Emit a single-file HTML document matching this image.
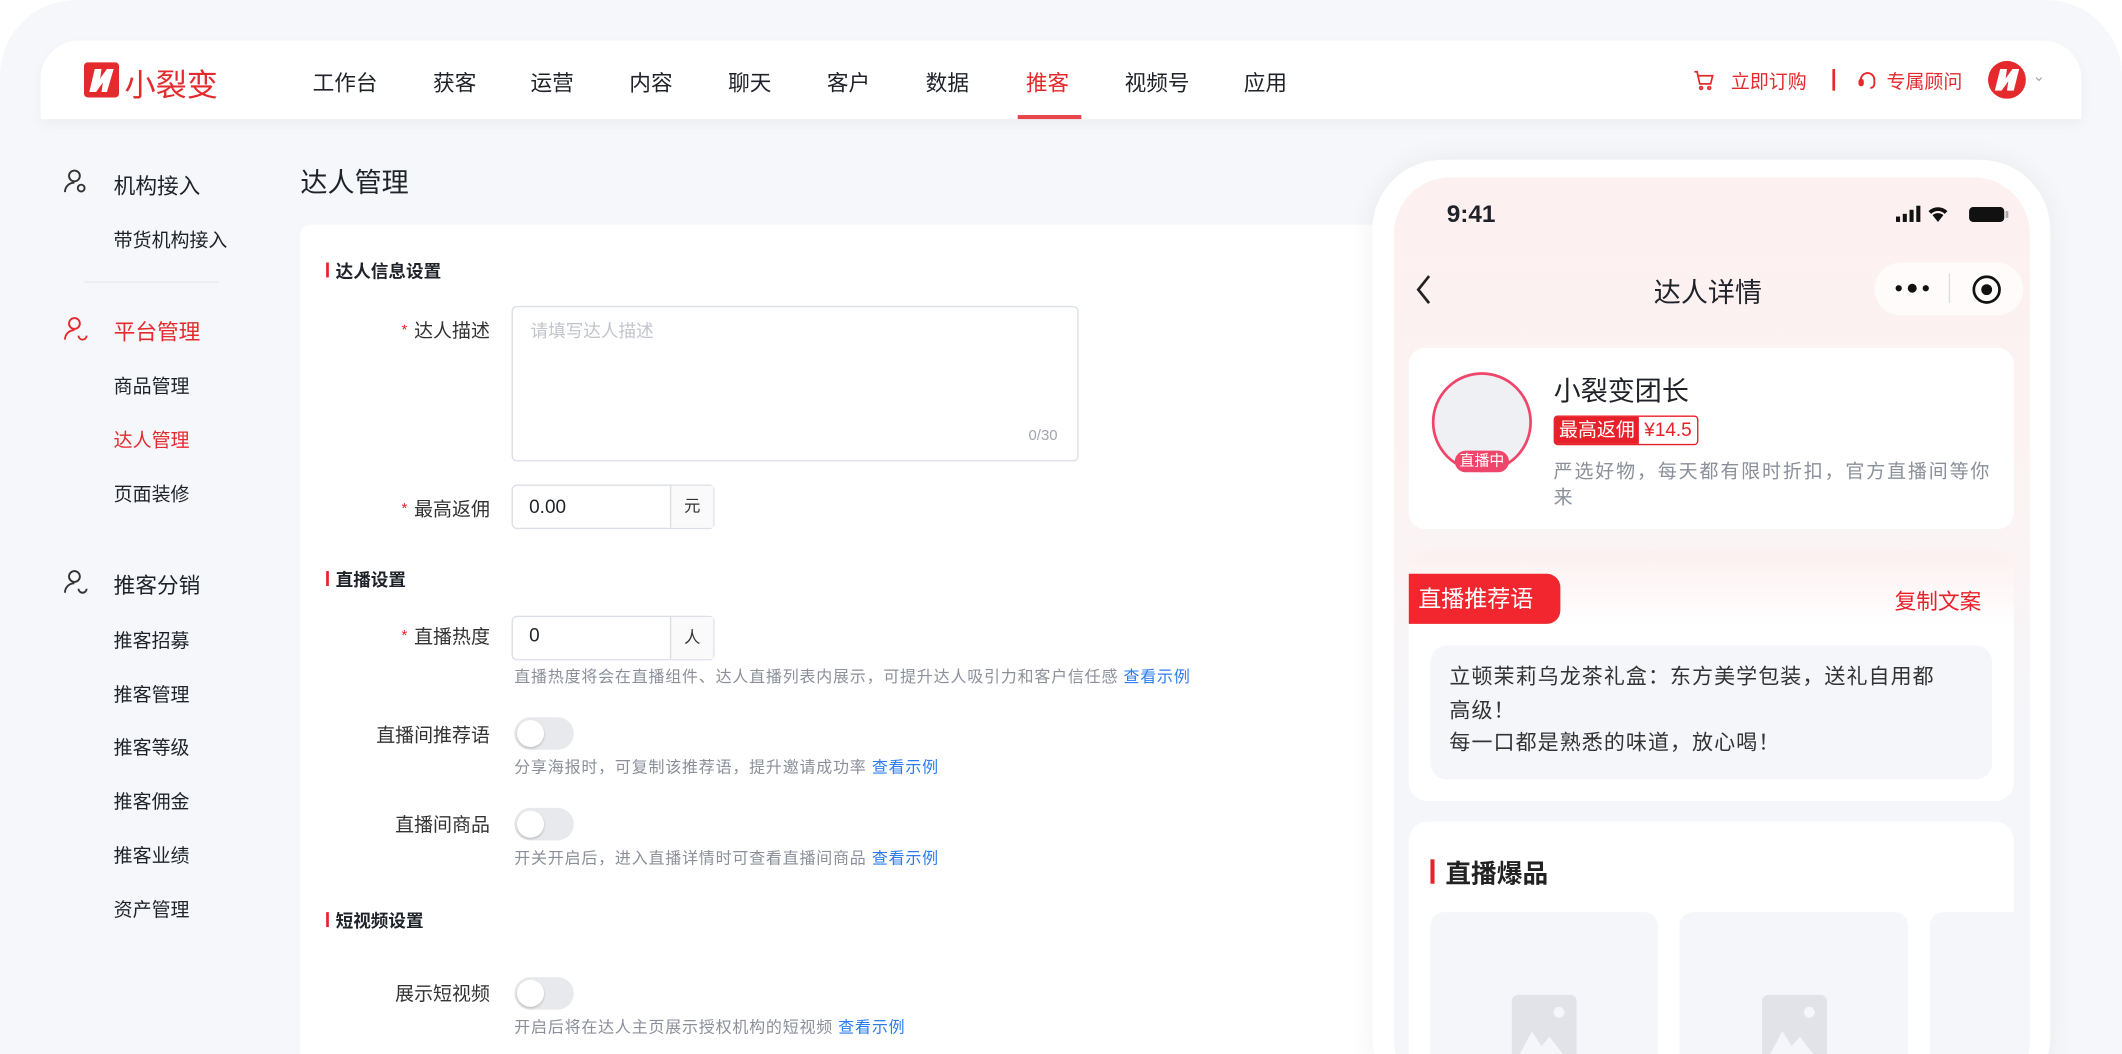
<!DOCTYPE html>
<html><head><meta charset="utf-8"><style>
*{margin:0;padding:0;box-sizing:border-box}
html,body{width:2122px;height:1054px;overflow:hidden;background:#fff}
body{font-family:"Liberation Sans","Noto Sans CJK SC",sans-serif;color:#1f2329}
#w{position:absolute;left:0;top:0;width:1568px;height:779px;transform:scale(1.35332);transform-origin:0 0;overflow:hidden}
.a{position:absolute;white-space:nowrap}
.outer{left:0;top:0;width:1568px;height:779px;background:#f6f7fa;border-radius:56px 56px 0 0}
.nav{left:30px;top:30px;width:1508px;height:58px;background:#fff;border-radius:28px 28px 0 0;box-shadow:0 4px 10px rgba(0,0,0,.04)}
.ni{top:48px;font-size:16px;color:#1f2329}
.sb{font-size:14px;color:#1f2329;left:84px}
.sh{font-size:16px;left:84px}
.card{left:222px;top:166px;width:840px;height:613px;background:#fff;border-radius:8px 8px 0 0}
.sec{font-size:13px;font-weight:bold;left:248px}
.sec:before{content:"";position:absolute;left:-7px;top:4px;width:2px;height:11px;background:#e8202a}
.lb{font-size:14px;color:#333;right:calc(1568px - 362px);text-align:right}
.req:before{content:"*";color:#e8202a;font-size:11px;margin-right:5px;position:relative;top:-2px}
.inp{border:1px solid #dcdfe6;border-radius:4px;background:#fff}
.help{font-size:11.8px;color:#8a8f99;left:380px;letter-spacing:.6px}
.help b{color:#2b7cf0;font-weight:normal}
.tg{width:44px;height:24px;border-radius:12px;background:#e8e9ec;left:380px}
.tg:after{content:"";position:absolute;left:2px;top:2px;width:20px;height:20px;border-radius:50%;background:#fff;box-shadow:0 1px 2px rgba(0,0,0,.2)}
</style></head><body><div id="w">
<div class="a outer"></div>
<div class="a nav"></div>
<svg class="a" style="left:62px;top:46px" width="26" height="26" viewBox="0 0 26 26"><rect width="26" height="26" rx="3" fill="#e52a2e"/><path d="M4 22 L8 5 L13 5 L12 12 L17 5 L22 5 L17 22 L13 22 L14 15 L9 22Z" fill="#fff"/></svg>
<div class="a" style="left:92px;top:44px;font-size:23px;color:#e52a2e">小裂变</div>
<div class="a ni" style="left:231px">工作台</div>
<div class="a ni" style="left:320px">获客</div>
<div class="a ni" style="left:392px">运营</div>
<div class="a ni" style="left:465px">内容</div>
<div class="a ni" style="left:538px">聊天</div>
<div class="a ni" style="left:611px">客户</div>
<div class="a ni" style="left:684px">数据</div>
<div class="a ni" style="left:758px;color:#e52a2e">推客</div>
<div class="a" style="left:752px;top:85px;width:47px;height:3px;background:#e8454b"></div>
<div class="a ni" style="left:831px">视频号</div>
<div class="a ni" style="left:919px">应用</div>
<svg class="a" style="left:1251px;top:51px" width="16" height="16" viewBox="0 0 16 16" fill="none" stroke="#e52a2e" stroke-width="1.3"><path d="M1 2h2l2 9h8l1.5-6H4"/><circle cx="6" cy="14" r="1"/><circle cx="12" cy="14" r="1"/></svg>
<div class="a" style="left:1279px;top:50px;font-size:14px;color:#e52a2e">立即订购</div>
<div class="a" style="left:1354px;top:51px;width:1.5px;height:16px;background:#e52a2e"></div>
<svg class="a" style="left:1372px;top:51px" width="16" height="16" viewBox="0 0 16 16" fill="none" stroke="#e52a2e" stroke-width="1.4"><path d="M3 10V8a5 5 0 0 1 10 0v3a3 3 0 0 1-3 3"/><rect x="2" y="8" width="2.5" height="4" rx="1" fill="#e52a2e"/></svg>
<div class="a" style="left:1394px;top:50px;font-size:14px;color:#e52a2e">专属顾问</div>
<svg class="a" style="left:1469px;top:45px" width="28" height="28" viewBox="0 0 28 28"><circle cx="14" cy="14" r="14" fill="#e52a2e"/><path d="M5 22 L9 6 L14 6 L13 13 L18 6 L23 6 L19 22 L14 22 L15 15 L10 22Z" fill="#fff"/></svg>
<div class="a" style="left:1502px;top:50px;font-size:11px;color:#aaa">⌄</div>
<svg class="a" style="left:46px;top:124px" width="20" height="20" viewBox="0 0 20 20" fill="none" stroke="#333" stroke-width="1.4"><circle cx="9" cy="6" r="4"/><path d="M2 18c0-4 3-7 7-7"/><circle cx="14" cy="15" r="2.5"/></svg>
<div class="a sh" style="top:124px">机构接入</div>
<div class="a sb" style="top:167px">带货机构接入</div>
<div class="a" style="left:62px;top:208px;width:100px;height:1px;background:#e8e9ed"></div>
<svg class="a" style="left:46px;top:233px" width="20" height="20" viewBox="0 0 20 20" fill="none" stroke="#e52a2e" stroke-width="1.4"><circle cx="9" cy="6" r="4"/><path d="M2 18c0-4 3-7 7-7"/><path d="M12 15a3 3 0 0 0 6 0"/></svg>
<div class="a sh" style="top:232px;color:#e52a2e">平台管理</div>
<div class="a sb" style="top:275px">商品管理</div>
<div class="a sb" style="top:315px;color:#e52a2e">达人管理</div>
<div class="a sb" style="top:355px">页面装修</div>
<svg class="a" style="left:46px;top:420px" width="20" height="20" viewBox="0 0 20 20" fill="none" stroke="#333" stroke-width="1.4"><circle cx="9" cy="6" r="4"/><path d="M2 18c0-4 3-7 7-7"/><path d="M12 15a3 3 0 0 0 6 0"/></svg>
<div class="a sh" style="top:419px">推客分销</div>
<div class="a sb" style="top:463px">推客招募</div>
<div class="a sb" style="top:503px">推客管理</div>
<div class="a sb" style="top:542px">推客等级</div>
<div class="a sb" style="top:582px">推客佣金</div>
<div class="a sb" style="top:622px">推客业绩</div>
<div class="a sb" style="top:662px">资产管理</div>
<div class="a" style="left:222px;top:119px;font-size:20px">达人管理</div>
<div class="a card"></div>
<div class="a sec" style="top:190px">达人信息设置</div>
<div class="a lb req" style="top:234px">达人描述</div>
<div class="a inp" style="left:378px;top:226px;width:419px;height:115px"></div>
<div class="a" style="left:392px;top:234px;font-size:13px;color:#c0c4cc">请填写达人描述</div>
<div class="a" style="left:760px;top:316px;font-size:11px;color:#a0a4ab">0/30</div>
<div class="a lb req" style="top:366px">最高返佣</div>
<div class="a inp" style="left:378px;top:358px;width:150px;height:33px"></div>
<div class="a" style="left:495px;top:359px;width:32px;height:31px;border-left:1px solid #dcdfe6;background:#fafafa;font-size:12px;text-align:center;line-height:31px;color:#333">元</div>
<div class="a" style="left:391px;top:366px;font-size:14px">0.00</div>
<div class="a sec" style="top:418px">直播设置</div>
<div class="a lb req" style="top:460px">直播热度</div>
<div class="a inp" style="left:378px;top:455px;width:150px;height:33px"></div>
<div class="a" style="left:495px;top:456px;width:32px;height:31px;border-left:1px solid #dcdfe6;background:#fafafa;font-size:12px;text-align:center;line-height:31px;color:#333">人</div>
<div class="a" style="left:391px;top:461px;font-size:14px">0</div>
<div class="a help" style="top:491px">直播热度将会在直播组件、达人直播列表内展示，可提升达人吸引力和客户信任感 <b>查看示例</b></div>
<div class="a lb" style="top:533px">直播间推荐语</div>
<div class="a tg" style="top:530px"></div>
<div class="a help" style="top:558px">分享海报时，可复制该推荐语，提升邀请成功率 <b>查看示例</b></div>
<div class="a lb" style="top:599px">直播间商品</div>
<div class="a tg" style="top:597px"></div>
<div class="a help" style="top:625px">开关开启后，进入直播详情时可查看直播间商品 <b>查看示例</b></div>
<div class="a sec" style="top:670px">短视频设置</div>
<div class="a lb" style="top:724px">展示短视频</div>
<div class="a tg" style="top:722px"></div>
<div class="a help" style="top:750px">开启后将在达人主页展示授权机构的短视频 <b>查看示例</b></div>
<div class="a" style="left:1014px;top:118px;width:501px;height:700px;background:#fff;border-radius:52px;box-shadow:0 0 20px rgba(0,0,0,.06)"></div>
<div class="a" style="left:1030px;top:131px;width:470px;height:680px;border-radius:42px;background:linear-gradient(180deg,#fdf0f0 0%,#fcf3f3 35%,#f5f6fa 60%,#f5f6fa 100%)"></div>
<div class="a" style="left:1069px;top:148px;font-size:18px;font-weight:bold">9:41</div>
<svg class="a" style="left:1400px;top:151px" width="86" height="14" viewBox="0 0 86 14"><rect x="1" y="9" width="3" height="4" fill="#111"/><rect x="6" y="7" width="3" height="6" fill="#111"/><rect x="11" y="4" width="3" height="9" fill="#111"/><rect x="16" y="1" width="3" height="12" fill="#111"/><path d="M25 5a10 10 0 0 1 14 0l-2 2a7 7 0 0 0-10 0z M28 8a6 6 0 0 1 8 0l-4 5z" fill="#111"/><rect x="55" y="2" width="26" height="11" rx="3" fill="#111"/><rect x="82" y="5" width="2" height="5" fill="#aaa"/></svg>
<svg class="a" style="left:1045px;top:202px" width="14" height="24" viewBox="0 0 14 24" fill="none" stroke="#222" stroke-width="2"><path d="M11 2 L3 12 L11 22"/></svg>
<div class="a" style="left:1222px;top:200px;font-size:20px">达人详情</div>
<div class="a" style="left:1385px;top:194px;width:110px;height:39px;border-radius:20px;background:rgba(255,255,255,.7)"></div>
<div class="a" style="left:1440px;top:202px;width:1px;height:22px;background:#ddd"></div>
<svg class="a" style="left:1400px;top:207px" width="26" height="12"><circle cx="3" cy="6" r="2.3" fill="#111"/><circle cx="13" cy="6" r="3.3" fill="#111"/><circle cx="23" cy="6" r="2.3" fill="#111"/></svg>
<svg class="a" style="left:1456px;top:202px" width="24" height="24"><circle cx="12" cy="12" r="9.5" fill="none" stroke="#111" stroke-width="2"/><circle cx="12" cy="12" r="4" fill="#111"/></svg>
<div class="a" style="left:1041px;top:257px;width:447px;height:134px;background:#fff;border-radius:12px"></div>
<div class="a" style="left:1058px;top:275px;width:74px;height:74px;border-radius:50%;border:2px solid #f0456a;background:#eff0f4"></div>
<div class="a" style="left:1075px;top:333px;width:40px;height:16px;border-radius:8px;background:#f0456a;color:#fff;font-size:11px;text-align:center;line-height:16px">直播中</div>
<div class="a" style="left:1148px;top:273px;font-size:20px">小裂变团长</div>
<div class="a" style="left:1148px;top:307px;height:22px;border:1.5px solid #e8202a;border-radius:3px;display:flex;font-size:14px;line-height:19px"><span style="background:#e8202a;color:#fff;padding:0 3px">最高返佣</span><span style="color:#e8202a;padding:0 4px">¥14.5</span></div>
<div class="a" style="left:1148px;top:339px;font-size:14px;letter-spacing:1.4px;color:#8a8f99;line-height:19px;white-space:normal;width:330px">严选好物，每天都有限时折扣，官方直播间等你来</div>
<div class="a" style="left:1041px;top:407px;width:447px;height:185px;background:linear-gradient(180deg,#fdf0f0,#fff 30%);border-radius:14px"></div>
<div class="a" style="left:1041px;top:424px;width:112px;height:37px;background:#f1262e;border-radius:0 10px 10px 0;color:#fff;font-size:17px;line-height:37px;padding-left:7px">直播推荐语</div>
<div class="a" style="left:1400px;top:431px;font-size:16px;color:#e8202a">复制文案</div>
<div class="a" style="left:1057px;top:477px;width:415px;height:99px;background:#f5f6fa;border-radius:12px"></div>
<div class="a" style="left:1071px;top:489px;font-size:15.5px;letter-spacing:.8px;line-height:24.5px;color:#333">立顿茉莉乌龙茶礼盒：东方美学包装，送礼自用都<br>高级！<br>每一口都是熟悉的味道，放心喝！</div>
<div class="a" style="left:1041px;top:607px;width:447px;height:250px;background:#fff;border-radius:14px"></div>
<div class="a" style="left:1057px;top:635px;width:3px;height:18px;background:#e8202a"></div>
<div class="a" style="left:1068px;top:631px;font-size:19px;font-weight:bold;color:#222">直播爆品</div>
<div class="a" style="left:1057px;top:674px;width:168px;height:200px;background:#f5f6fa;border-radius:10px"></div>
<div class="a" style="left:1241px;top:674px;width:169px;height:200px;background:#f5f6fa;border-radius:10px"></div>
<div class="a" style="left:1426px;top:674px;width:62px;height:200px;background:#f5f6fa;border-radius:10px 0 0 10px"></div>
<svg class="a" style="left:1117px;top:735px" width="48" height="50" viewBox="0 0 48 50"><rect width="48" height="50" rx="5" fill="#e1e3e8"/><circle cx="35" cy="13" r="4" fill="#f5f6fa"/><path d="M6 44 L15 27 L22 38 L28 31 L38 44Z" fill="#f5f6fa"/></svg>
<svg class="a" style="left:1302px;top:735px" width="48" height="50" viewBox="0 0 48 50"><rect width="48" height="50" rx="5" fill="#e1e3e8"/><circle cx="35" cy="13" r="4" fill="#f5f6fa"/><path d="M6 44 L15 27 L22 38 L28 31 L38 44Z" fill="#f5f6fa"/></svg>
</div></body></html>
